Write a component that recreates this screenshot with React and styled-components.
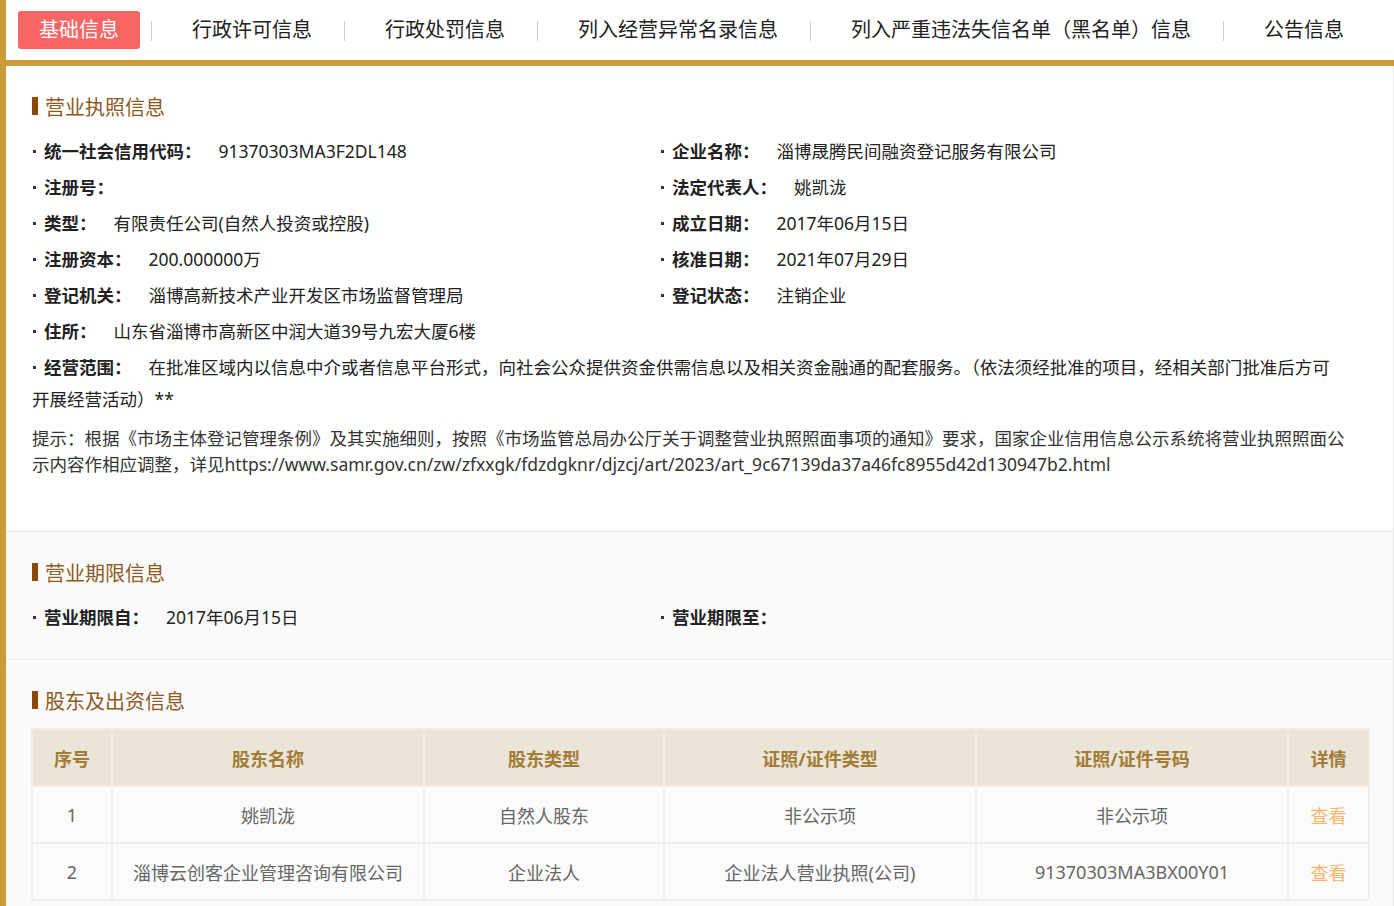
import React from 'react'
import styled, { createGlobalStyle } from 'styled-components'

const GlobalStyle = createGlobalStyle`
  body {
    margin: 0;
    background: #fff;
    font-family: 'Noto Sans', 'Noto Sans CJK SC', sans-serif;
    color: #222;
  }
`

const Page = styled.div`
  border-left: 6px solid #cc9a36;
  min-height: 100vh;
  box-sizing: border-box;
`

const TabBar = styled.div`
  display: flex;
  align-items: center;
  height: 60px;
  padding-left: 12px;
  border-bottom: 6px solid #cc9a36;
`

const Tab = styled.div`
  padding: 0 21px;
  height: 38px;
  line-height: 38px;
  font-size: 20px;
  border-radius: 3px;
  color: ${(p) => (p.$active ? '#fff' : '#222')};
  background: ${(p) => (p.$active ? '#f76565' : 'transparent')};
  white-space: nowrap;
`

const TabSep = styled.span`
  width: 1px;
  height: 20px;
  background: #cfcfcf;
  margin: 2px 19px 0 11px;
`

const Content = styled.div`
  border-right: 1px solid #e8e8e8;
`

const Section = styled.section`
  background: ${(p) => (p.$grey ? '#fafafa' : '#fff')};
  padding: ${(p) => p.$pad || '28px 25px 27px 26px'};
  border-bottom: 1px solid #ececec;
`

const Title = styled.h3`
  display: flex;
  align-items: center;
  gap: 7px;
  margin: 0 0 ${(p) => p.$mb || 17}px;
  height: 24px;
  font-size: 20px;
  font-weight: 400;
  color: #8c5a22;
  &::before {
    content: '';
    width: 6px;
    height: 18px;
    background: #8a4806;
  }
`

const InfoGrid = styled.div`
  display: grid;
  grid-template-columns: 628px 1fr;
  row-gap: 4px;
  padding-right: 28px;
  font-size: 17.5px;
`

const Row = styled.div`
  line-height: 32px;
  grid-column: ${(p) => (p.$wide ? '1 / -1' : 'auto')};
`

const Bullet = styled.span`
  display: inline-block;
  width: 12px;
  height: 32px;
  vertical-align: top;
  position: relative;
  &::before {
    content: '';
    position: absolute;
    left: 1px;
    top: 15px;
    width: 3px;
    height: 3px;
    background: #333;
  }
`

const Label = styled.span`
  font-weight: 700;
  color: #222;
`

const Value = styled.span`
  margin-left: ${(p) => p.$gap || 17}px;
  color: #222;
`

const Note = styled.p`
  margin: 10px 18px 0 0;
  font-size: 17.5px;
  line-height: 26px;
  color: #333;
`

const Table = styled.table`
  width: 1337px;
  margin-left: -1px;
  border-collapse: collapse;
  table-layout: fixed;
  font-size: 18px;
`

const Th = styled.th`
  height: 55px;
  padding: 0;
  background: #ebe4d8;
  color: #a27b34;
  font-weight: 700;
  border: 2px solid #f1ede6;
`

const Td = styled.td`
  height: 55px;
  padding: 0;
  text-align: center;
  color: #666;
  background: #fbfbfb;
  border: 2px solid #efefef;
`

const Link = styled.span`
  color: #f8b56c;
`

const tabs = ['基础信息', '行政许可信息', '行政处罚信息', '列入经营异常名录信息', '列入严重违法失信名单（黑名单）信息', '公告信息']

const info = [
  ['统一社会信用代码：', '91370303MA3F2DL148'],
  ['企业名称：', '淄博晟腾民间融资登记服务有限公司'],
  ['注册号：', ''],
  ['法定代表人：', '姚凯泷'],
  ['类型：', '有限责任公司(自然人投资或控股)'],
  ['成立日期：', '2017年06月15日'],
  ['注册资本：', '200.000000万'],
  ['核准日期：', '2021年07月29日'],
  ['登记机关：', '淄博高新技术产业开发区市场监督管理局'],
  ['登记状态：', '注销企业'],
  ['住所：', '山东省淄博市高新区中润大道39号九宏大厦6楼'],
  ['', null],
]

const cols = [80, 312, 240, 312, 312, 81]
const heads = ['序号', '股东名称', '股东类型', '证照/证件类型', '证照/证件号码', '详情']
const holders = [
  ['1', '姚凯泷', '自然人股东', '非公示项', '非公示项'],
  ['2', '淄博云创客企业管理咨询有限公司', '企业法人', '企业法人营业执照(公司)', '91370303MA3BX00Y01'],
]

export default function App() {
  return (
    <Page>
      <GlobalStyle />
      <TabBar>
        {tabs.map((t, i) => (
          <React.Fragment key={t}>
            {i > 0 && <TabSep />}
            <Tab $active={i === 0}>{t}</Tab>
          </React.Fragment>
        ))}
      </TabBar>
      <Content>
        <Section $pad='28px 25px 54px 26px'>
          <Title>营业执照信息</Title>
          <InfoGrid>
            {info.map(([k, v], i) =>
              v === null ? (
                <Row key={i} />
              ) : (
                <Row key={i}>
                  <Bullet />
                  <Label>{k}</Label>
                  {v && <Value>{v}</Value>}
                </Row>
              )
            )}
            <Row $wide>
              <Bullet />
              <Label>经营范围：</Label>
              <Value>
                在批准区域内以信息中介或者信息平台形式，向社会公众提供资金供需信息以及相关资金融通的配套服务。（依法须经批准的项目，经相关部门批准后方可开展经营活动）**
              </Value>
            </Row>
          </InfoGrid>
          <Note>
            提示：根据《市场主体登记管理条例》及其实施细则，按照《市场监管总局办公厅关于调整营业执照照面事项的通知》要求，国家企业信用信息公示系统将营业执照照面公示内容作相应调整，详见https://www.samr.gov.cn/zw/zfxxgk/fdzdgknr/djzcj/art/2023/art_9c67139da37a46fc8955d42d130947b2.html
          </Note>
        </Section>
        <Section $grey $pad='28px 25px 26px 26px'>
          <Title>营业期限信息</Title>
          <InfoGrid>
            <Row>
              <Bullet />
              <Label>营业期限自：</Label>
              <Value>2017年06月15日</Value>
            </Row>
            <Row>
              <Bullet />
              <Label>营业期限至：</Label>
            </Row>
          </InfoGrid>
        </Section>
        <Section $grey $pad='28px 25px 20px 26px'>
          <Title $mb={16}>股东及出资信息</Title>
          <Table>
            <colgroup>
              {cols.map((w, i) => (
                <col key={i} style={{ width: w }} />
              ))}
            </colgroup>
            <thead>
              <tr>
                {heads.map((h) => (
                  <Th key={h}>{h}</Th>
                ))}
              </tr>
            </thead>
            <tbody>
              {holders.map((r) => (
                <tr key={r[0]}>
                  {r.map((c, i) => (
                    <Td key={i}>{c}</Td>
                  ))}
                  <Td>
                    <Link>查看</Link>
                  </Td>
                </tr>
              ))}
            </tbody>
          </Table>
        </Section>
      </Content>
    </Page>
  )
}
